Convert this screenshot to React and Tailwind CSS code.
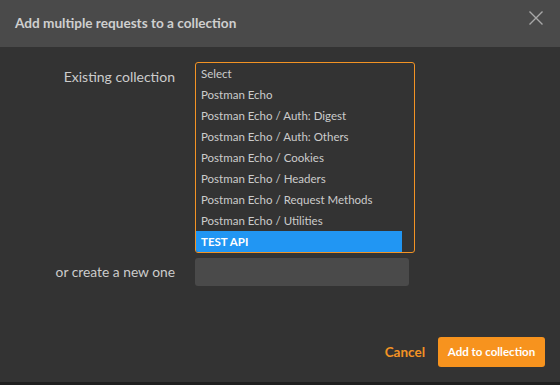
import React from "react";

const options = [
  "Select",
  "Postman Echo",
  "Postman Echo / Auth: Digest",
  "Postman Echo / Auth: Others",
  "Postman Echo / Cookies",
  "Postman Echo / Headers",
  "Postman Echo / Request Methods",
  "Postman Echo / Utilities",
  "TEST API",
];

export default function App() {
  return (
    <div className="w-[560px] h-[385px] flex flex-col bg-[#333333] text-[#cccccc]" style={{ fontFamily: "Lato, 'Open Sans', sans-serif" }}>
      <div className="h-[47px] shrink-0 bg-[#4a4a4a] flex items-center justify-between pl-[15px] pr-[17px]">
        <h1 className="text-[13.6px] font-bold text-[#cfcfcf]">Add multiple requests to a collection</h1>
        <svg width="14" height="14" viewBox="0 0 14 14" className="text-[#a8a8a8] self-start mt-[11px]">
          <path d="M0.5 0.5L13.5 13.5M13.5 0.5L0.5 13.5" stroke="currentColor" strokeWidth="1.4" fill="none" />
        </svg>
      </div>

      <div className="flex-1 pt-[15px]">
        <div className="grid grid-cols-[175px_1fr] gap-x-[20px] gap-y-[5px]">
          <div className="text-right text-[14px] pt-[5px] leading-[20px]">Existing collection</div>
          <div className="w-[220px] h-[191px] border border-[#f39324] rounded-[3px] overflow-hidden pr-[12px]">
            {options.map((o) => (
              <div
                key={o}
                className={`h-[21px] pl-[5px] flex items-center text-[11.5px] ${o === "TEST API" ? "bg-[#2196f3] text-white font-bold" : ""}`}
              >
                {o}
              </div>
            ))}
          </div>

          <div className="text-right text-[13.8px] flex items-center justify-end">or create a new one</div>
          <div className="w-[214px] h-[28px] bg-[#4a4a4a] rounded-[3px]"></div>
        </div>
      </div>

      <div className="flex items-center justify-end gap-[13px] pr-[15px] pb-[15px]">
        <button className="text-[13.5px] font-bold text-[#f39324]">Cancel</button>
        <button className="w-[107px] h-[30px] bg-[#f7931e] text-white text-[11.5px] font-bold rounded-[3px]">Add to collection</button>
      </div>
      <div className="h-[3px] bg-[#1f1f1f] shrink-0"></div>
    </div>
  );
}
